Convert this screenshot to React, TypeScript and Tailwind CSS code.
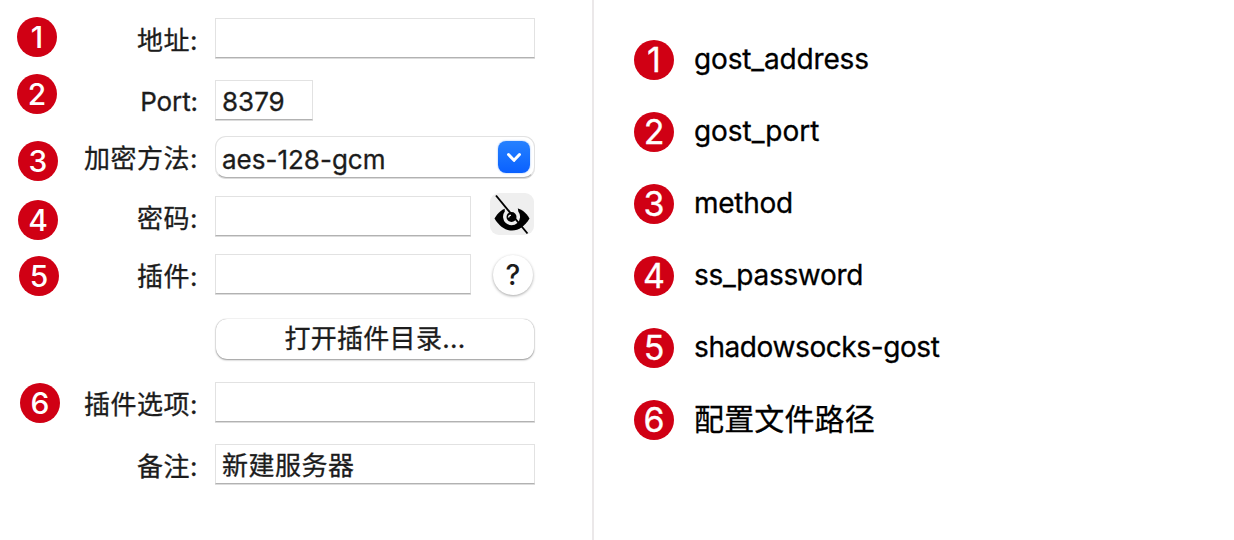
import React from "react";

const badges = [
  { n: 1, pos: "ml-[17px] mt-[17px]" },
  { n: 2, pos: "ml-[17px] mt-[17px]" },
  { n: 3, pos: "ml-[18px] mt-[27px]" },
  { n: 4, pos: "ml-[18px] mt-[19px]" },
  { n: 5, pos: "ml-[19px] mt-[16px]" },
  { n: 6, pos: "ml-[20px] mt-[87px]" },
];

const labels = [
  { text: "地址:", pos: "mt-[21px]" },
  { text: "Port:", pos: "mt-[21px]", latin: true },
  { text: "加密方法:", pos: "mt-[17px]" },
  { text: "密码:", pos: "mt-[20px]" },
  { text: "插件:", pos: "mt-[18px]" },
  { text: "插件选项:", pos: "mt-[88px]" },
  { text: "备注:", pos: "mt-[22px]" },
];

const legend = [
  { n: 1, text: "gost_address", track: "tracking-[-0.15px]" },
  { n: 2, text: "gost_port", track: "tracking-[-0.05px]" },
  { n: 3, text: "method", track: "tracking-[-0.25px]" },
  { n: 4, text: "ss_password", track: "tracking-[-0.3px]" },
  { n: 5, text: "shadowsocks-gost", track: "tracking-[-0.4px]" },
  { n: 6, text: "配置文件路径", track: "text-[30px] tracking-[0.15px]" },
];

function Badge({ n, className }: { n: number; className: string }) {
  return (
    <div
      className={`flex size-10 shrink-0 items-center justify-center rounded-full bg-[#d00014] leading-10 text-white ${className}`}
    >
      {n}
    </div>
  );
}

function Field({ value, className }: { value?: string; className: string }) {
  return (
    <div
      className={`flex h-10 shrink-0 items-center border border-[#e2e2e2] border-b-[#b2b2b2] bg-white pt-[3px] pl-1.5 whitespace-nowrap shadow-[0_1px_0_#dcdcdc] ${className}`}
    >
      {value}
    </div>
  );
}

function EyeOff() {
  return (
    <svg viewBox="0 0 44 42" className="h-[42px] w-11">
      <path d="M4.500 25.500C8 19.500 13 14.500 22 14.500S36 19.500 39.500 25.500C35 33 29 37.500 22 37.500S9 33 4.500 25.500Z" fill="#000" />
      <path d="M14.500 13h13l.8 5.500a8.500 8.500 0 1 1-13.500 0Z" fill="#efefef" />
      <circle cx="21.500" cy="24" r="5" fill="#000" />
      <path d="M18.500 24.500a3 3 0 0 1 2.500-2.500" fill="none" stroke="#efefef" strokeWidth="1.500" />
      <path d="M6 2.500 37.500 40.500" stroke="#000" strokeWidth="1.900" />
    </svg>
  );
}

export default function App() {
  return (
    <main className="flex h-[540px] w-[1234px] overflow-hidden bg-white font-['Inter','Noto_Sans_CJK_SC',sans-serif] text-[26px] text-[#1c1c1c]">
      <section className="flex h-full w-[594px] shrink-0 border-r-2 border-[#ebe8e9] [-webkit-text-stroke:0.3px]">
        <div className="flex w-[64px] shrink-0 flex-col">
          {badges.map((b) => (
            <Badge key={b.n} n={b.n} className={`text-[30px] font-medium [-webkit-text-stroke:0px] ${b.pos}`} />
          ))}
        </div>
        <div className="flex w-[134px] shrink-0 flex-col items-end">
          {labels.map((l) => (
            <div
              key={l.text}
              className={`h-10 leading-10 whitespace-nowrap ${l.latin ? "tracking-[-0.1px]" : "tracking-[0.5px]"} ${l.pos}`}
            >
              {l.text}
            </div>
          ))}
        </div>
        <div className="ml-[17px] flex w-80 flex-col">
          <Field className="mt-[18px]" />
          <Field className="mt-[22px] w-[98px]" value="8379" />
          <div className="mt-[16px] flex h-[42px] shrink-0 items-center justify-between rounded-[11px] border border-[#e2e2e2] border-b-[#b2b2b2] pr-1 pl-1.5 shadow-[0_1px_0_#dcdcdc]">
            <span className="pt-1">aes-128-gcm</span>
            <span className="flex size-8 items-center justify-center rounded-[8px] bg-linear-to-b from-[#2681ff] to-[#0a60ff] shadow-[0_0_2px_#86b5ff]">
              <svg viewBox="0 0 32 32" className="size-8">
                <path d="m10.500 13.500 5.500 5.800 5.500-5.800" fill="none" stroke="#fff" strokeWidth="3" strokeLinecap="round" strokeLinejoin="round" />
              </svg>
            </span>
          </div>
          <div className="mt-[18px] flex h-10 shrink-0">
            <Field className="w-64" />
            <div className="-mt-[3px] ml-[19px] h-[42px] w-11 rounded-[9px] bg-[#efefef]">
              <EyeOff />
            </div>
          </div>
          <div className="mt-[18px] flex h-10 shrink-0">
            <Field className="w-64" />
            <div className="mt-px ml-[22px] flex size-10 items-center justify-center rounded-full bg-white text-[28px] font-medium shadow-[0_1px_3px_rgba(0,0,0,0.35)] [-webkit-text-stroke:0px]">
              ?
            </div>
          </div>
          <div className="mx-px mt-[25px] flex h-10 shrink-0 items-center justify-center rounded-[11px] bg-white pb-0.5 tracking-[0.3px] shadow-[0_1px_2px_rgba(0,0,0,0.4),0_0_1px_rgba(0,0,0,0.35)]">
            打开插件目录...
          </div>
          <Field className="mt-[23px]" />
          <Field className="mt-[22px] tracking-[0.5px]" value="新建服务器" />
        </div>
      </section>
      <section className="flex flex-col gap-8 pt-10 pl-10 text-[28px] text-black [-webkit-text-stroke:0.3px]">
        {legend.map((item) => (
          <div key={item.n} className="flex h-10 items-center gap-5">
            <Badge n={item.n} className="text-[34px]" />
            <span className={`pb-0.5 leading-10 whitespace-nowrap ${item.track}`}>{item.text}</span>
          </div>
        ))}
      </section>
    </main>
  );
}
